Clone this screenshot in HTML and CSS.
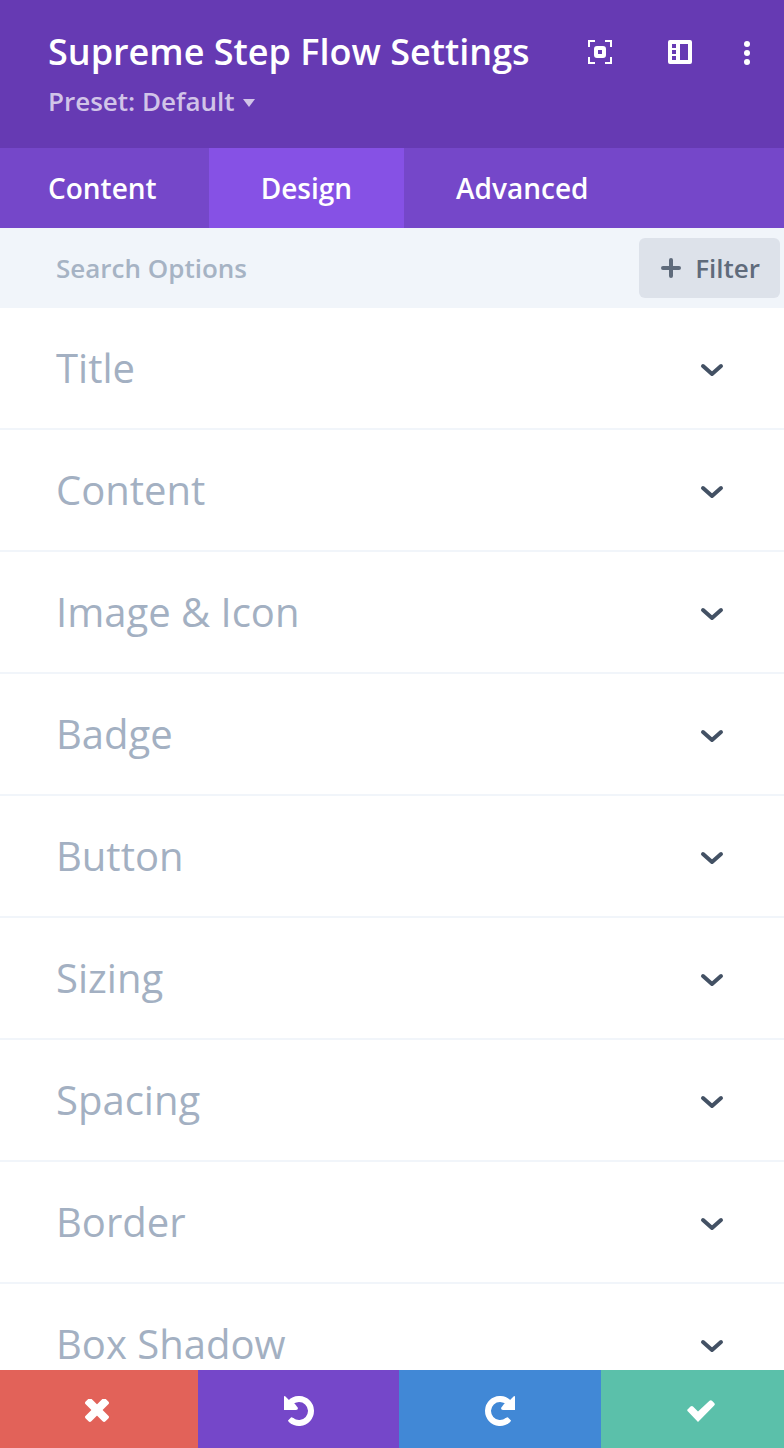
FILE: index.html
```html
<!DOCTYPE html>
<html lang="en">

<head>
    <meta charset="UTF-8">
    <meta name="viewport" content="width=device-width, initial-scale=1.0">
    <title>Supreme Step Flow Settings</title>
    <link rel="stylesheet" href="styles.css">
</head>

<body>
    <div class="settings-panel">
        <header class="header">
            <div class="header-top">
                <h1>Supreme Step Flow Settings</h1>
                <div class="header-actions">
                    <button type="button" aria-label="Expand">
                        <svg width="24" height="24" viewBox="0 0 24 24">
                            <path d="M1 7V1h6M17 1h6v6M23 17v6h-6M7 23H1v-6" fill="none" stroke="#fff" stroke-width="2" />
                            <rect x="8" y="8" width="8" height="8" rx="1" fill="none" stroke="#fff" stroke-width="4" />
                        </svg>
                    </button>
                    <button type="button" aria-label="Snap to side">
                        <svg width="24" height="24" viewBox="0 0 24 24">
                            <path d="M2 0h20q2 0 2 2v20q0 2-2 2H2q-2 0-2-2V2q0-2 2-2zM12 4v16h8V4zM4 4v4h4V4zM4 10v4h4v-4zM4 16v4h4v-4z" fill="#fff" fill-rule="evenodd" />
                        </svg>
                    </button>
                    <button type="button" aria-label="More">
                        <svg width="6" height="26" viewBox="0 0 6 26">
                            <circle cx="3" cy="5" r="3" fill="#fff" />
                            <circle cx="3" cy="14" r="3" fill="#fff" />
                            <circle cx="3" cy="23" r="3" fill="#fff" />
                        </svg>
                    </button>
                </div>
            </div>
            <button type="button" class="preset">
                Preset: Default
                <svg width="12" height="8" viewBox="0 0 12 8"><path d="M0 0h12L6 8z" fill="currentColor" /></svg>
            </button>
        </header>

        <nav class="tabs">
            <button type="button" class="tab">Content</button>
            <button type="button" class="tab active">Design</button>
            <button type="button" class="tab">Advanced</button>
        </nav>

        <div class="search-bar">
            <input type="text" placeholder="Search Options" aria-label="Search Options">
            <button type="button" class="filter-btn">
                <svg width="20" height="20" viewBox="0 0 20 20"><path d="M10 2v16M2 10h16" stroke="currentColor" stroke-width="4" stroke-linecap="round" /></svg>
                Filter
            </button>
        </div>

        <!-- Option groups -->
        <main class="options">
            <button type="button" class="option">Title
                <svg class="chevron" width="24" height="14" viewBox="0 0 24 14"><path d="M3 3l9 8 9-8" /></svg>
            </button>
            <button type="button" class="option">Content
                <svg class="chevron" width="24" height="14" viewBox="0 0 24 14"><path d="M3 3l9 8 9-8" /></svg>
            </button>
            <button type="button" class="option">Image &amp; Icon
                <svg class="chevron" width="24" height="14" viewBox="0 0 24 14"><path d="M3 3l9 8 9-8" /></svg>
            </button>
            <button type="button" class="option">Badge
                <svg class="chevron" width="24" height="14" viewBox="0 0 24 14"><path d="M3 3l9 8 9-8" /></svg>
            </button>
            <button type="button" class="option">Button
                <svg class="chevron" width="24" height="14" viewBox="0 0 24 14"><path d="M3 3l9 8 9-8" /></svg>
            </button>
            <button type="button" class="option">Sizing
                <svg class="chevron" width="24" height="14" viewBox="0 0 24 14"><path d="M3 3l9 8 9-8" /></svg>
            </button>
            <button type="button" class="option">Spacing
                <svg class="chevron" width="24" height="14" viewBox="0 0 24 14"><path d="M3 3l9 8 9-8" /></svg>
            </button>
            <button type="button" class="option">Border
                <svg class="chevron" width="24" height="14" viewBox="0 0 24 14"><path d="M3 3l9 8 9-8" /></svg>
            </button>
            <button type="button" class="option">Box Shadow
                <svg class="chevron" width="24" height="14" viewBox="0 0 24 14"><path d="M3 3l9 8 9-8" /></svg>
            </button>
        </main>

        <footer class="footer">
            <button type="button" class="discard" aria-label="Discard changes">
                <svg width="24" height="24" viewBox="0 0 24 24">
                    <g transform="translate(12 11) rotate(45)" fill="#fff">
                        <rect x="-14" y="-4" width="28" height="8" rx="2" />
                        <rect x="-4" y="-14" width="8" height="28" rx="2" />
                    </g>
                </svg>
            </button>
            <button type="button" class="undo" aria-label="Undo">
                <svg width="30" height="30" viewBox="0 0 30 30">
                    <path d="M6.5 6.5A12 12 0 1 1 7.300 24.200" fill="none" stroke="#fff" stroke-width="6" />
                    <path d="M4 24.500l3-3q1-.500 2 .500l1 1-2 5-3-2q-1-1-1-1.500zM0 1q0-1.500 1.500-.500L5 4l6 4 3 4q0 2-2 2H0z" fill="#fff" />
                </svg>
            </button>
            <button type="button" class="redo" aria-label="Redo">
                <svg width="30" height="30" viewBox="0 0 30 30">
                    <g transform="translate(30 0) scale(-1 1)">
                        <path d="M6.5 6.5A12 12 0 1 1 7.300 24.200" fill="none" stroke="#fff" stroke-width="6" />
                        <path d="M4 24.500l3-3q1-.500 2 .500l1 1-2 5-3-2q-1-1-1-1.500zM0 1q0-1.500 1.500-.500L5 4l6 4 3 4q0 2-2 2H0z" fill="#fff" />
                    </g>
                </svg>
            </button>
            <button type="button" class="save" aria-label="Save changes">
                <svg width="28" height="22" viewBox="0 0 28 22">
                    <path d="M1 11.500q-1.500-1.500 0-2.500L3.500 6.500q1.500-1 2.500 0l5 5L22.500.800q1.300-1.200 2.500 0L27.200 3q1.300 1.300 0 2.500L11 22z" fill="#fff" />
                </svg>
            </button>
        </footer>
    </div>
</body>

</html>
```
FILE: styles.css
```css
* {
    margin: 0;
    padding: 0;
    box-sizing: border-box;
}

body {
    font-family: 'Open Sans', sans-serif;
    background-color: #fff;
}

button {
    background: none;
    border: none;
    font-family: inherit;
    color: inherit;
    cursor: pointer;
}

svg {
    display: block;
    flex-shrink: 0;
}

.settings-panel {
    display: flex;
    flex-direction: column;
    height: 100vh;
    overflow: hidden;
}

.header {
    background-color: #663ab3;
    color: #fff;
    padding: 26px 34px 28px 48px;
}

.header-top {
    display: flex;
    justify-content: space-between;
    align-items: center;
}

.header h1 {
    font-size: 36px;
    font-weight: 600;
    line-height: 52px;
}

.header-actions {
    display: flex;
    align-items: center;
    gap: 56px;
}

.header-actions button:last-child {
    margin-left: -4px;
}

.preset {
    display: flex;
    align-items: center;
    gap: 8px;
    margin-top: 4px;
    font-size: 26px;
    font-weight: 600;
    line-height: 38px;
    color: #d1c4e8;
}

.preset svg {
    margin-top: 4px;
}

.tabs {
    display: flex;
    background-color: #7547c9;
}

.tab {
    padding: 20px 52px;
    font-size: 28px;
    font-weight: 600;
    line-height: 40px;
    color: #fff;
}

.tab:first-child {
    padding-left: 48px;
}

.tab.active {
    background-color: #8651e5;
}

.search-bar {
    display: flex;
    justify-content: space-between;
    padding: 10px 4px 10px 56px;
    background-color: #f1f5fa;
}

.search-bar input {
    flex: 1;
    min-width: 0;
    border: none;
    outline: none;
    background: none;
    font-family: inherit;
    font-size: 26px;
    font-weight: 600;
    color: #4c5866;
}

.search-bar input::placeholder {
    color: #a6b3c4;
}

.filter-btn {
    display: flex;
    align-items: center;
    gap: 14px;
    padding: 0 20px 0 22px;
    border-radius: 6px;
    background-color: #dde2ea;
    font-size: 26px;
    font-weight: 600;
    line-height: 60px;
    color: #5f6b7b;
}

.options {
    flex: 1;
    min-height: 0;
    overflow: hidden;
}

.option {
    display: flex;
    justify-content: space-between;
    align-items: center;
    width: 100%;
    padding: 32px 60px 32px 56px;
    border-bottom: 2px solid #f1f5fa;
    font-size: 40px;
    line-height: 56px;
    text-align: left;
    color: #a3b0c2;
}

.chevron {
    margin-top: 4px;
    fill: none;
    stroke: #435164;
    stroke-width: 4;
    stroke-linecap: round;
    stroke-linejoin: round;
}

.footer {
    display: grid;
    grid-template-columns: 198fr 201fr 202fr 183fr;
}

.footer button {
    display: flex;
    justify-content: center;
    align-items: center;
    height: 78px;
    padding-top: 4px;
}

.footer .discard {
    padding-right: 4px;
    background-color: #e26259;
}

.footer .undo {
    background-color: #7547c9;
}

.footer .redo {
    background-color: #4188d6;
}

.footer .save {
    padding-left: 16px;
    background-color: #5bc0aa;
}
```
